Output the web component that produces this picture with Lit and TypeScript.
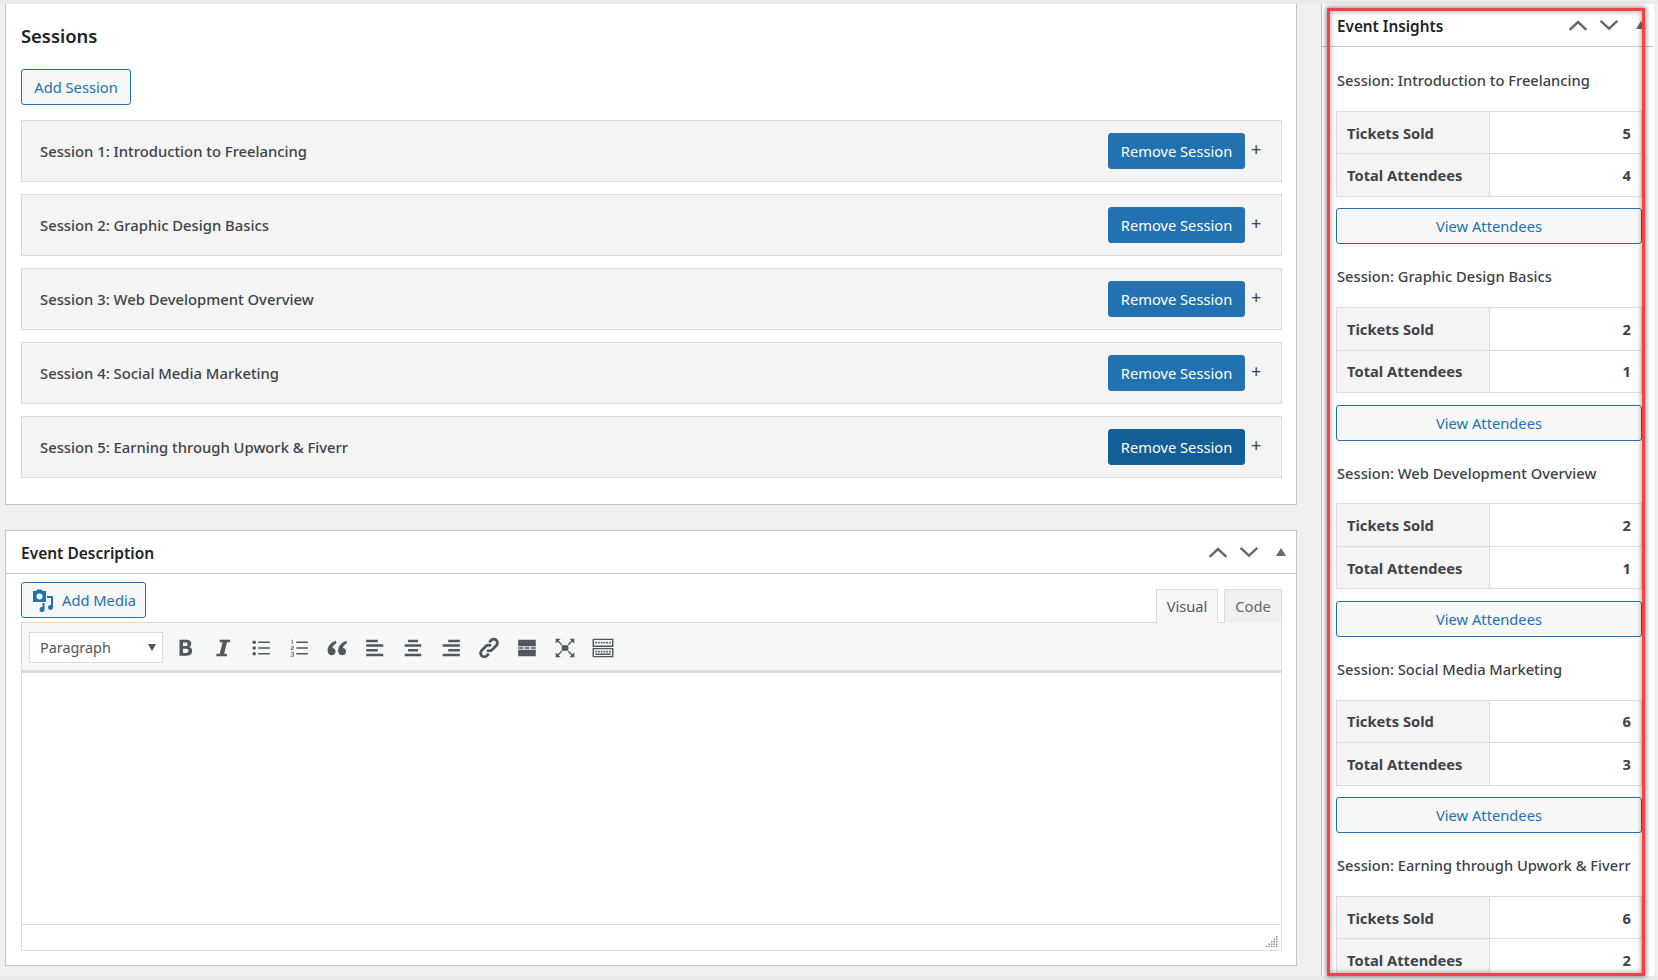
import { LitElement, html, css, svg } from "lit";
import { customElement } from "lit/decorators.js";

const sessions = [
  { name: "Introduction to Freelancing", sold: 5, att: 4 },
  { name: "Graphic Design Basics", sold: 2, att: 1 },
  { name: "Web Development Overview", sold: 2, att: 1 },
  { name: "Social Media Marketing", sold: 6, att: 3 },
  { name: "Earning through Upwork & Fiverr", sold: 6, att: 2 },
];

const chevUp = html`<svg class="ctl" viewBox="0 0 20 20"><path d="M3 14 10 7.500l7 6.500" fill="none" stroke="#646970" stroke-width="2"/></svg>`;
const chevDown = html`<svg class="ctl" viewBox="0 0 20 20"><path d="M3 6.500 10 13l7-6.500" fill="none" stroke="#646970" stroke-width="2"/></svg>`;
const tri = html`<svg class="ctl tri" viewBox="0 0 20 20"><path d="M5 14 10 6l5 8z" fill="#646970"/></svg>`;

const icons = [
  svg`<path d="M5 2.500h6.400c2.700 0 4.300 1.400 4.300 3.600 0 1.500-.8 2.600-2 3.100 1.700.4 2.800 1.700 2.800 3.600 0 2.600-1.900 4.200-4.900 4.200H5V2.500zm3.200 2.500v3.200h2.500c1.100 0 1.700-.6 1.700-1.600S11.800 5 10.700 5H8.200zm0 5.600v3.900h2.900c1.300 0 2-.7 2-2s-.7-1.900-2-1.900H8.200z"/>`,
  svg`<path d="M7 2.500h9.500v2.300h-2.900L11 15.200h2.500v2.300H4v-2.300h3L9.600 4.800H7z"/>`,
  svg`<circle cx="3.800" cy="4.800" r="1.600"/><circle cx="3.800" cy="10" r="1.600"/><circle cx="3.800" cy="15.200" r="1.600"/><path d="M7.500 4.200H18v1.300H7.500zM7.500 9.400H18v1.300H7.500zM7.500 14.600H18v1.300H7.500z"/>`,
  svg`<path d="M7.500 4.200H18v1.300H7.500zM7.500 9.400H18v1.300H7.500zM7.500 14.600H18v1.300H7.500z"/><path d="M3 2.500h1.400v4H3.400V3.400H3zM2.500 8.500h2.900v1L4 11h1.400v.9H2.500v-1L3.900 9.400H2.500zM2.500 13.500h2.900v4.500H2.500v-.9h2v-.9H3v-.9h1.500v-.9h-2z" opacity=".7"/>`,
  svg`<path d="M9 3.500C4.800 5 1.500 8.200 1.500 12.200c0 2.500 1.500 4.300 3.700 4.300 2 0 3.500-1.500 3.500-3.400 0-1.800-1.200-3.100-2.900-3.300.4-1.700 1.700-3.100 3.700-4.100zM18.500 3.500C14.300 5 11 8.200 11 12.200c0 2.500 1.500 4.300 3.700 4.300 2 0 3.500-1.500 3.500-3.400 0-1.800-1.200-3.100-2.900-3.300.4-1.700 1.700-3.100 3.700-4.100z"/>`,
  svg`<path d="M2 2.500h10.500v2.200H2zM2 6.700h15.500v2.200H2zM2 11h10.500v2.200H2zM2 15.300h15.500v2.200H2z"/>`,
  svg`<path d="M5.500 2.500h9v2.200h-9zM2.500 6.700h15v2.200h-15zM5.500 11h9v2.200h-9zM2.500 15.300h15v2.200h-15z"/>`,
  svg`<path d="M7.500 2.500H18v2.200H7.500zM2.500 6.700H18v2.200H2.500zM7.500 11H18v2.200H7.500zM2.500 15.300H18v2.200H2.500z"/>`,
  svg`<g fill="none" stroke="currentColor" stroke-width="2.500"><path d="M8.200 11.800a3.100 3.100 0 0 0 4.400 0l4.100-4.100a3.300 3.300 0 0 0-4.700-4.700l-1.800 1.800"/><path d="M11.800 8.200a3.100 3.100 0 0 0-4.400 0l-4.100 4.100a3.300 3.300 0 0 0 4.700 4.700l1.800-1.800"/></g>`,
  svg`<path d="M2 2.500h16v6H2zM2 9.300h4.500v1.400H2zM7.700 9.300h4.600v1.400H7.700zM13.500 9.300H18v1.400h-4.500zM2 11.500h16v6H2z"/>`,
  svg`<path d="M7 7.500h6v5H7z"/><path d="M3 3l4 4M17 3l-4 4M3 17l4-4M17 17l-4-4" stroke="currentColor" stroke-width="1.300" fill="none"/><path d="M1.500 1.500H6L1.500 6zM18.500 1.500V6L14 1.500zM1.500 18.500V14L6 18.500zM18.500 18.500H14l4.500-4.500z"/>`,
  svg`<path fill-rule="evenodd" d="M.5 1.500h19v7.500H.5zm1.300 1.200v5.100h16.400V2.700zM.5 10h19v8.500H.5zm1.300 1.200v6.100h16.400v-6.100z"/><path d="M3 4.300h1.500v1.500H3zM5.500 4.300H7v1.500H5.500zM8 4.300h1.500v1.500H8zM10.500 4.300H12v1.500h-1.500zM13 4.300h1.500v1.500H13zM15.500 4.300H17v1.500h-1.500zM3 12.500h1.500V14H3zM5.500 12.500H7V14H5.500zM8 12.500h1.500V14H8zM10.500 12.500H12V14h-1.500zM13 12.500h1.500V14H13zM15.500 12.500H17V14h-1.500zM3 15h14v1.300H3z"/>`,
];

@customElement("app-root")
export class AppRoot extends LitElement {
  static styles = css`
    :host { display: block; width: 1658px; height: 980px; position: relative; overflow: hidden; background: #f0f0f1; font-family: "Noto Sans", "Open Sans", sans-serif; font-size: 14.7px; color: #3c434a; }
    * { box-sizing: border-box; }
    .page { display: flex; height: 980px; padding: 4px 0 4px 5px; align-items: flex-start; }
    .strip { height: 4px; background: #e8eaec; position: absolute; left: 0; right: 0; }
    .strip.top { top: 0; }
    .strip.bot { bottom: 0; }
    .main { width: 1292px; display: flex; flex-direction: column; gap: 25px; }
    .box { background: #fff; border: 1px solid #c3c4c7; border-width: 0 1px 1px 1px; padding: 0 14px 0 15px; }
    .sessions { height: 501px; padding-top: 19px; border-top: 0; }
    h3 { margin: 0; font-size: 18.400px; font-weight: 600; line-height: 26px; color: #1d2327; }
    .btn { display: inline-flex; align-items: center; justify-content: center; height: 36px; border: 1px solid #2271b1; border-radius: 3px; background: #f6f7f7; color: #2271b1; font-size: 14.700px; padding: 0 12px; }
    .add { margin-top: 20px; width: 110px; padding: 0; }
    .row { margin-top: 15px; height: 62px; background: #f4f4f4; border: 1px solid #dcdcde; display: flex; align-items: center; padding: 0 10px 0 18px; font-weight: 500; }
    .row + .row { margin-top: 12px; }
    .row .name { flex: 1; font-size: 14.800px; }
    .primary { background: #2271b1; color: #fff; width: 137px; padding: 0 0 0 0; font-weight: 400; }
    .primary.dark { background: #135e96; border-color: #135e96; }
    .plus { width: 26px; text-align: left; padding-left: 6px; align-self: flex-start; margin-top: 17px; font-weight: 400; color: #3c434a; font-size: 18px; line-height: 22px; }
    .desc { height: 436px; border-top: 1px solid #c3c4c7; padding: 0; }
    .head { height: 43px; border-bottom: 1px solid #c3c4c7; display: flex; align-items: center; padding: 0 5px 0 15px; }
    .head .title { flex: 1; font-size: 15.500px; font-weight: 600; color: #1d2327; padding-top: 1px; }
    .ctl { width: 24px; height: 24px; margin-left: 7px; display: block; }
    .ctl.tri { width: 20px; height: 20px; margin-left: 10px; }
    .editor { padding: 8px 14px 0 15px; }
    .edtop { display: flex; align-items: flex-end; height: 40px; }
    .media { width: 125px; padding: 0; gap: 7px; margin-bottom: 4px; }
    .media svg { width: 24px; height: 24px; }
    .tabs { margin-left: auto; display: flex; gap: 6px; }
    .tab { height: 34px; border: 1px solid #dcdcde; border-bottom: 0; display: flex; align-items: center; justify-content: center; background: #f0f0f1; color: #646970; font-size: 14.700px; width: 58px; position: relative; top: 1px; padding-bottom: 2px; }
    .tab.on { width: 62px; background: #f6f7f7; color: #50575e; }
    .toolbar { height: 51px; background: #f6f7f7; border: 1px solid #dcdcde; border-bottom: 3px solid #dcdcde; display: flex; align-items: center; padding: 2px 0 0 7px; }
    .select { width: 134px; height: 31px; background: #fff; border: 1px solid #dcdcde; display: flex; align-items: center; padding: 0 6px 0 10px; color: #50575e; font-size: 14.400px; justify-content: space-between; margin-right: 3px; }
    .select i { width: 0; height: 0; border: 4px solid transparent; border-top: 7px solid #50575e; border-bottom: 0; }
    .tool { width: 38px; height: 30px; display: flex; align-items: center; justify-content: center; color: #50575e; }
    .tool svg { width: 22px; height: 22px; fill: currentColor; display: block; }
    .area { height: 251px; border: 1px solid #dcdcde; border-width: 0 1px; background: #fff; }
    .status { height: 27px; border: 1px solid #dcdcde; display: flex; align-items: flex-end; justify-content: flex-end; padding: 0 3px 3px 0; }
    .status svg { width: 12px; height: 12px; display: block; }

    .side { margin-left: 24px; width: 333px; height: 972px; background: #fff; border-left: 1px solid #c3c4c7; overflow: hidden; flex: none; }
    .side .head { height: 43px; padding: 0 3px 0 15px; }
    .side .head .title { font-size: 15.300px; }
    .ins { padding: 1.500px 0 0 14px; width: 320px; }
    .ins h4 { margin: 0; height: 62.250px; display: flex; align-items: center; font-size: 14.700px; font-weight: 500; padding: 1px 0 0 1px; }
    table { width: 306px; border-collapse: collapse; table-layout: fixed; margin-bottom: 11.500px; }
    td, th { height: 42.500px; border: 1px solid #dcdcde; padding: 0 10px; font-size: 14.700px; font-weight: 700; }
    th { width: 153px; background: #f4f4f4; text-align: left; }
    td { text-align: right; background: #fff; }
    .view { width: 306px; padding: 0; display: flex; margin-bottom: .500px; }
    .redbox { position: absolute; left: 1327px; top: 8px; width: 318px; height: 968px; border: 3px solid #f44147; box-shadow: 0 0 5px 1px rgba(0,0,0,.45), inset 0 0 5px 1px rgba(0,0,0,.3); pointer-events: none; }
  `;

  render() {
    return html`
      <div class="strip top"></div>
      <div class="strip bot"></div>
      <div class="page">
        <div class="main">
          <section class="box sessions">
            <h3>Sessions</h3>
            <div class="btn add">Add Session</div>
            ${sessions.map((s, i) => html`
              <div class="row">
                <span class="name">Session ${i + 1}: ${s.name}</span>
                <div class="btn primary ${i === 4 ? "dark" : ""}">Remove Session</div>
                <span class="plus">+</span>
              </div>`)}
          </section>
          <section class="box desc">
            <div class="head"><span class="title">Event Description</span>${chevUp}${chevDown}${tri}</div>
            <div class="editor">
              <div class="edtop">
                <div class="btn media">
                  <svg viewBox="0 0 24 24" fill="#2271b1"><path fill-rule="evenodd" d="M2 3h3l1.500-1.500h4L12 3h3v11H2zm6.500 2.500a3 3 0 1 0 0 6 3 3 0 0 0 0-6z"/><path d="M16 8h6v11.500a2.500 2.500 0 1 1-2-2.400V10h-4zM13.500 15v6.500a2.500 2.500 0 1 1-2-2.400V15z"/></svg>
                  Add Media
                </div>
                <div class="tabs"><div class="tab on">Visual</div><div class="tab">Code</div></div>
              </div>
              <div class="toolbar">
                <div class="select">Paragraph<i></i></div>
                ${icons.map((p) => html`<div class="tool"><svg viewBox="0 0 20 20">${p}</svg></div>`)}
              </div>
              <div class="area"></div>
              <div class="status">
                <svg viewBox="0 0 12 12" fill="#8c8f94"><path d="M10 1h1.500v1.500H10zM10 3.500h1.500V5H10zM7.500 3.500H9V5H7.500zM10 6h1.500v1.500H10zM7.500 6H9v1.500H7.500zM5 6h1.500v1.500H5zM10 8.500h1.500V10H10zM7.500 8.500H9V10H7.500zM5 8.500h1.500V10H5zM2.500 8.500H4V10H2.500zM10 11h1.500v1H10zM7.500 11H9v1H7.500zM5 11h1.500v1H5zM2.500 11H4v1H2.500zM0 11h1.500v1H0z"/></svg>
              </div>
            </div>
          </section>
        </div>
        <aside class="side">
          <div class="head"><span class="title">Event Insights</span>${chevUp}${chevDown}${tri}</div>
          <div class="ins">
            ${sessions.map((s) => html`
              <h4>Session: ${s.name}</h4>
              <table>
                <tr><th>Tickets Sold</th><td>${s.sold}</td></tr>
                <tr><th>Total Attendees</th><td>${s.att}</td></tr>
              </table>
              <div class="btn view">View Attendees</div>`)}
          </div>
        </aside>
      </div>
      <div class="redbox"></div>
    `;
  }
}
